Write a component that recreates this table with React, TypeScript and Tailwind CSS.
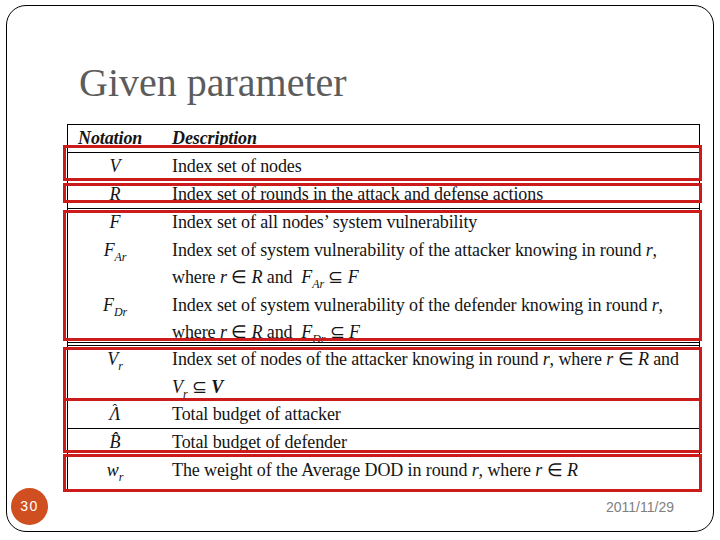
import React from "react";

const serif = "font-['Liberation_Serif','Times_New_Roman',serif]";

function Row({
  n,
  children,
  className = "",
}: {
  n?: React.ReactNode;
  children?: React.ReactNode;
  className?: string;
}) {
  return (
    <div className={"flex h-[27.5px] leading-[27.5px] " + className}>
      <div className="w-[94px] shrink-0 text-center italic">{n}</div>
      <div className="pl-[10px] whitespace-nowrap">{children}</div>
    </div>
  );
}

function Sub({ children }: { children: React.ReactNode }) {
  return <span className="text-[12px] italic align-[-5px]">{children}</span>;
}

function I({ children }: { children: React.ReactNode }) {
  return <span className="italic">{children}</span>;
}

export default function App() {
  return (
    <div className="w-[720px] h-[540px] bg-white pt-[5px] pl-[6px] overflow-hidden">
      <div className="w-[708px] h-[527px] border border-black rounded-[20px] flex flex-col">
        <div
          className={
            serif +
            " mt-[56.5px] pl-[72px] text-[40px] leading-[40px] text-[#5c5c5c]"
          }
        >
          Given parameter
        </div>

        <div
          className={
            serif +
            " relative mt-[21.5px] ml-[60px] w-[633px] h-[366px] border border-black text-[18px] tracking-[-0.1px] text-[#141414]"
          }
        >
          <div className="flex h-[28px] leading-[27px] border-b border-black font-bold italic">
            <div className="w-[94px] shrink-0 pl-[10px]">Notation</div>
            <div className="pl-[10px]">Description</div>
          </div>
          <Row n="V">Index set of nodes</Row>
          <Row n="R">Index set of rounds in the attack and defense actions</Row>
          <div className="h-[138px] border-t border-b-[4px] border-double border-black">
            <Row n="F">Index set of all nodes’ system vulnerability</Row>
            <Row
              n={
                <>
                  F<Sub>Ar</Sub>
                </>
              }
            >
              Index set of system vulnerability of the attacker knowing in round <I>r</I>,
            </Row>
            <Row>
              where <I>r</I> ∈ <I>R</I> and&nbsp; <I>F</I>
              <Sub>Ar</Sub> ⊆ <I>F</I>
            </Row>
            <Row
              n={
                <>
                  F<Sub>Dr</Sub>
                </>
              }
            >
              Index set of system vulnerability of the defender knowing in round <I>r</I>,
            </Row>
            <Row>
              where <I>r</I> ∈ <I>R</I> and&nbsp; <I>F</I>
              <Sub>Dr</Sub> ⊆ <I>F</I>
            </Row>
          </div>
          <Row
            n={
              <>
                V<Sub>r</Sub>
              </>
            }
          >
            Index set of nodes of the attacker knowing in round <I>r</I>, where <I>r</I> ∈{" "}
            <I>R</I> and
          </Row>
          <Row>
            <I>V</I>
            <Sub>r</Sub> ⊆ <span className="italic font-bold">V</span>
          </Row>
          <Row
            n={
              <span className="relative inline-block">
                Λ
                <span className="absolute left-[3px] top-[2px] leading-[14px] not-italic text-[14px]">ˆ</span>
              </span>
            }
            className="h-[28px] border-b border-black"
          >
            Total budget of attacker
          </Row>
          <Row n={"B\u0302"}>Total budget of defender</Row>
          <Row
            n={
              <>
                w<Sub>r</Sub>
              </>
            }
          >
            The weight of the Average DOD in round <I>r</I>, where <I>r</I> ∈ <I>R</I>
          </Row>

          <div className="absolute left-[-5px] w-[639px] top-[20px] h-[36px] border-[3px] border-[#cc1b1b]" />
          <div className="absolute left-[-5px] w-[639px] top-[58px] h-[20px] border-[3px] border-[#cc1b1b]" />
          <div className="absolute left-[-5px] w-[639px] top-[85px] h-[131px] border-[3px] border-[#cc1b1b]" />
          <div className="absolute left-[-5px] w-[639px] top-[222px] h-[54px] border-[3px] border-[#cc1b1b]" />
          <div className="absolute left-[-5px] w-[639px] top-[273px] h-[55px] border-[3px] border-[#cc1b1b]" />
          <div className="absolute left-[-5px] w-[639px] top-[329px] h-[38px] border-[3px] border-[#cc1b1b]" />
        </div>

        <div className="-mt-[2px] flex items-center justify-between pl-[4px] pr-[39px] font-['Liberation_Sans',Arial,sans-serif]">
          <div className="w-[37px] h-[37px] rounded-full bg-[#d04f20] text-white text-[14px] tracking-[1.5px] flex items-center justify-center">
            30
          </div>
          <div className="text-[14px] leading-[16px] text-[#808080]">2011/11/29</div>
        </div>
      </div>
    </div>
  );
}
